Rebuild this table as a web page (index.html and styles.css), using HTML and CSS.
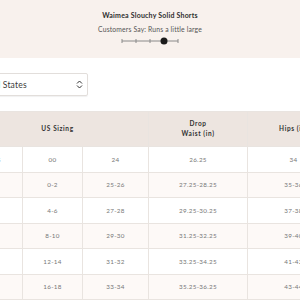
FILE: index.html
```html
<!DOCTYPE html>
<html lang="en">
<head>
    <title>Size guide</title>
    <meta charset="UTF-8">
    <meta name="viewport" content="width=device-width, initial-scale=1">
    <link rel="stylesheet" href="styles.css">
</head>
<body>
    <section class="fit-band">
        <div class="fit-title">Waimea Slouchy Solid Shorts</div>
        <div class="fit-note">Customers Say: Runs a little large</div>
        <svg class="fit-scale" width="58" height="8" viewBox="0 0 58 8">
            <line x1="1" y1="4" x2="57" y2="4" stroke="#8a8a8a" stroke-width="1"/>
            <line x1="1" y1="2" x2="1" y2="6" stroke="#8a8a8a" stroke-width="1"/>
            <line x1="15" y1="2" x2="15" y2="6" stroke="#8a8a8a" stroke-width="1"/>
            <line x1="29" y1="2" x2="29" y2="6" stroke="#8a8a8a" stroke-width="1"/>
            <line x1="57" y1="2" x2="57" y2="6" stroke="#8a8a8a" stroke-width="1"/>
            <circle cx="43" cy="4" r="3.5" fill="#1a1a1a"/>
        </svg>
    </section>

    <div class="country-row">
        <div class="country-select">
            <span>United States</span>
            <svg width="7" height="9" viewBox="0 0 7 9">
                <path d="M1 3.5 L3.5 1 L6 3.5" fill="none" stroke="#333" stroke-width="1"/>
                <path d="M1 5.5 L3.5 8 L6 5.5" fill="none" stroke="#333" stroke-width="1"/>
            </svg>
        </div>
    </div>

    <div class="chart-wrap">
        <table class="size-chart">
            <colgroup>
                <col class="col-label">
                <col class="col-us">
                <col class="col-num">
                <col class="col-waist">
                <col class="col-hips">
                <col>
            </colgroup>
            <thead>
                <tr>
                    <th colspan="3">US Sizing</th>
                    <th>Drop<br>Waist (in)</th>
                    <th>Hips (in)</th>
                    <th>Inseam (in)</th>
                </tr>
            </thead>
            <tbody>
                <tr><td>XXS</td><td>00</td><td>24</td><td>26.25</td><td>34</td><td>3</td></tr>
                <tr><td>XS</td><td>0-2</td><td>25-26</td><td>27.25-28.25</td><td>35-36</td><td>3</td></tr>
                <tr><td>S</td><td>4-6</td><td>27-28</td><td>29.25-30.25</td><td>37-38</td><td>3</td></tr>
                <tr><td>M</td><td>8-10</td><td>29-30</td><td>31.25-32.25</td><td>39-40</td><td>3</td></tr>
                <tr><td>L</td><td>12-14</td><td>31-32</td><td>33.25-34.25</td><td>41-42</td><td>3</td></tr>
                <tr><td>XL</td><td>16-18</td><td>33-34</td><td>35.25-36.25</td><td>43-44</td><td>3</td></tr>
            </tbody>
        </table>
    </div>
</body>
</html>
```

FILE: styles.css
```css
body, html {
    margin: 0;
    padding: 0;
    background: #fff;
    font-family: "Lato", "Liberation Sans", sans-serif;
    overflow: hidden;
}

.fit-band {
    height: 58px;
    box-sizing: border-box;
    padding-top: 11px;
    background: #f8f1ed;
    display: flex;
    flex-direction: column;
    align-items: center;
}

.fit-title {
    font-size: 7px;
    line-height: 9px;
    font-weight: bold;
    color: #2e2e2e;
    letter-spacing: 0.2px;
}

.fit-note {
    margin-top: 4.5px;
    font-size: 6.8px;
    line-height: 9px;
    color: #555;
    letter-spacing: 0.15px;
}

.fit-scale {
    margin-top: 3.5px;
    display: block;
}

.country-row {
    padding-top: 15px;
    height: 38px;
    box-sizing: border-box;
}

.country-select {
    margin-left: -31px;
    width: 119px;
    height: 23px;
    box-sizing: border-box;
    border: 1px solid #e2dedb;
    border-radius: 2px;
    box-shadow: 0 1px 1px rgba(0, 0, 0, 0.06);
    display: flex;
    align-items: center;
    justify-content: space-between;
    padding: 0 4px 0 4px;
    font-size: 8.5px;
    color: #3a3a3a;
    letter-spacing: 0.2px;
}

.country-select svg {
    display: block;
}

.chart-wrap {
    margin-top: 15px;
    margin-left: -34px;
}

.size-chart {
    border-collapse: collapse;
    table-layout: fixed;
    width: 460px;
    color: #777;
}

.col-label { width: 56px; }
.col-us { width: 60px; }
.col-num { width: 66px; }
.col-waist { width: 99px; }
.col-hips { width: 92px; }

.size-chart th,
.size-chart td {
    border: 1px solid #e9e4e0;
    text-align: center;
    padding: 0;
}

.size-chart th {
    height: 34px;
    background: #ede5e0;
    color: #333;
    font-size: 6.5px;
    line-height: 10px;
    font-weight: bold;
    letter-spacing: 0.6px;
}

.size-chart td {
    height: 24.5px;
    font-size: 6.3px;
    letter-spacing: 0.3px;
}

.size-chart tbody tr:nth-child(even) td {
    background: #fdf9f7;
}
```
